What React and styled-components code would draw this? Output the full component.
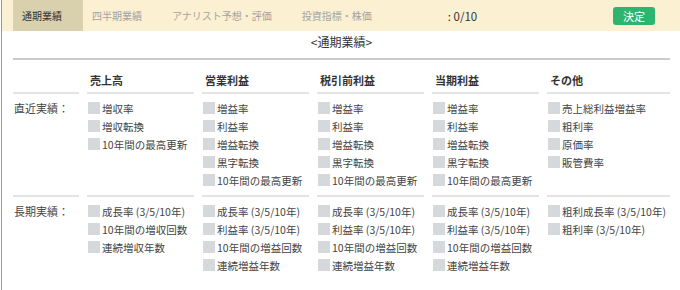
import React from "react";
import styled, { createGlobalStyle } from "styled-components";

const GlobalStyle = createGlobalStyle`
  body {
    margin: 0;
    background: #fff;
    font-family: "Noto Sans CJK JP", "Liberation Sans", sans-serif;
    color: #444;
  }
`;

const tabs = ["通期業績", "四半期業績", "アナリスト予想・評価", "投資指標・株価"];

const profitRecent = ["増益率", "利益率", "増益転換", "黒字転換", "10年間の最高更新"];
const profitLong = ["成長率 (3/5/10年)", "利益率 (3/5/10年)", "10年間の増益回数", "連続増益年数"];

const columns = [
  {
    title: "売上高",
    recent: ["増収率", "増収転換", "10年間の最高更新"],
    long: ["成長率 (3/5/10年)", "10年間の増収回数", "連続増収年数"],
  },
  { title: "営業利益", recent: profitRecent, long: profitLong },
  { title: "税引前利益", recent: profitRecent, long: profitLong },
  { title: "当期利益", recent: profitRecent, long: profitLong },
  {
    title: "その他",
    recent: ["売上総利益増益率", "粗利率", "原価率", "販管費率"],
    long: ["粗利成長率 (3/5/10年)", "粗利率 (3/5/10年)"],
  },
];

const App = () => {
  return (
    <Root>
      <GlobalStyle />
      <TabBar>
        {tabs.map((t, i) => (
          <Tab key={t} $active={i === 0}>
            {t}
          </Tab>
        ))}
        <Count>: 0/10</Count>
        <DecideButton>決定</DecideButton>
      </TabBar>
      <Body>
        <Title>&lt;通期業績&gt;</Title>
        <Rule />
        <Grid>
          <HeadCell />
          {columns.map((c) => (
            <HeadCell key={c.title}>{c.title}</HeadCell>
          ))}

          <LabelCell $line>直近実績：</LabelCell>
          {columns.map((c) => (
            <ItemCell key={c.title} $line>
              {c.recent.map((item) => (
                <Item key={item}>
                  <Box />
                  {item}
                </Item>
              ))}
            </ItemCell>
          ))}

          <LabelCell>長期実績：</LabelCell>
          {columns.map((c) => (
            <ItemCell key={c.title}>
              {c.long.map((item) => (
                <Item key={item}>
                  <Box />
                  {item}
                </Item>
              ))}
            </ItemCell>
          ))}
        </Grid>
      </Body>
    </Root>
  );
};

export default App;

const Root = styled.div`
  margin-left: 1px;
  border-left: 1px solid #9a9a9a;
  height: 290px;
  box-sizing: border-box;
`;

const TabBar = styled.div`
  display: flex;
  align-items: center;
  height: 31px;
  background: #fbf0d1;
  padding: 0 25px 0 11px;
`;

const Tab = styled.div`
  height: 31px;
  display: flex;
  align-items: center;
  padding: 0 21px 0 9px;
  font-size: 10px;
  background: ${(p) => (p.$active ? "#d9d0ae" : "transparent")};
  color: ${(p) => (p.$active ? "#333" : "#a3a3a3")};
`;

const Count = styled.div`
  margin-left: 55px;
  font-size: 11.5px;
  color: #333;
`;

const DecideButton = styled.button`
  margin-left: auto;
  width: 42px;
  height: 18px;
  border: none;
  border-radius: 3px;
  background: #2db56f;
  color: #fff;
  font-family: inherit;
  font-size: 11px;
  padding: 0;
  line-height: 18px;
`;

const Body = styled.div`
  padding: 0 10px 0 11px;
`;

const Title = styled.div`
  margin-top: 3px;
  height: 16px;
  line-height: 16px;
  font-size: 12px;
  color: #333;
  text-align: center;
`;

const Rule = styled.div`
  margin-top: 8px;
  height: 2px;
  background: #cacaca;
`;

const Grid = styled.div`
  display: grid;
  grid-template-columns: 66px repeat(4, 107px) 123px;
  column-gap: 8px;
`;

const HeadCell = styled.div`
  padding: 12px 0 4px 3px;
  height: 16px;
  line-height: 16px;
  font-size: 11px;
  font-weight: bold;
  color: #333;
  border-bottom: 2px solid #e4e4e4;
`;

const LabelCell = styled.div`
  padding: 6px 0 0 1px;
  font-size: 11px;
  line-height: 16px;
  color: #444;
  border-bottom: ${(p) => (p.$line ? "2px solid #e4e4e4" : "none")};
`;

const ItemCell = styled.div`
  display: flex;
  flex-direction: column;
  padding: 5px 0 ${(p) => (p.$line ? "6px" : "0")} 1px;
  border-bottom: ${(p) => (p.$line ? "2px solid #e4e4e4" : "none")};
`;

const Item = styled.div`
  display: flex;
  align-items: center;
  height: 18px;
  font-size: 10.5px;
  color: #444;
  white-space: nowrap;
`;

const Box = styled.span`
  width: 12px;
  height: 12px;
  background: #d6d9dc;
  margin-right: 2px;
  flex-shrink: 0;
`;
